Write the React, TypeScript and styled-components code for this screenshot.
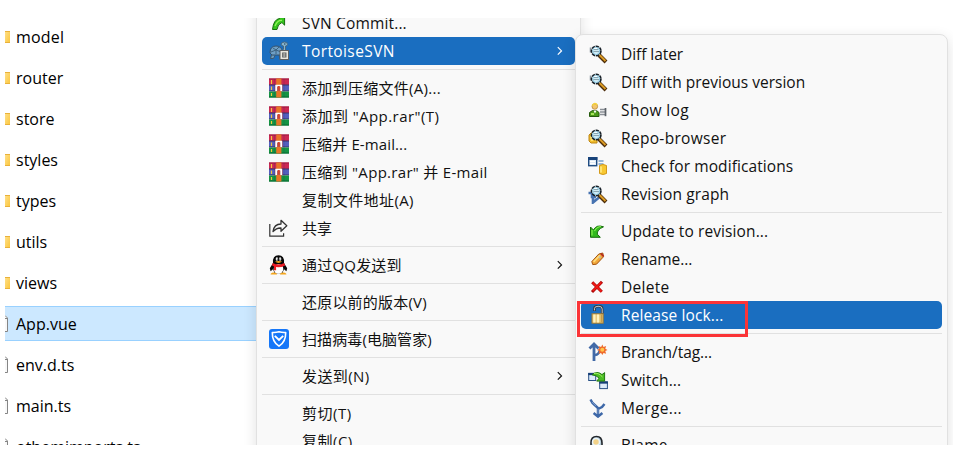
import React from "react";
import styled, { createGlobalStyle } from "styled-components";

const GlobalStyle = createGlobalStyle`
  * { box-sizing: border-box; }
  body { margin: 0; background: #fff; overflow: hidden; }
`;

const Desktop = styled.main`
  width: 953px;
  height: 449px;
  padding: 18px 0 4px 5px;
  background: #fff;
  color: #111;
  font-family: "Open Sans", "Noto Sans CJK SC", sans-serif;
`;

const Viewport = styled.div`
  position: relative;
  height: 427px;
  overflow: hidden;
`;

const FileList = styled.ul`
  list-style: none;
  margin: 0;
  padding: 1px 0 0;
  width: 252px;
  display: flex;
  flex-direction: column;
  gap: 6px;
`;

const FileRow = styled.li<{ $selected?: boolean }>`
  display: flex;
  align-items: center;
  flex: none;
  height: 35px;
  border: solid ${(p) => (p.$selected ? "#99d1ff" : "transparent")};
  border-width: 1px 0;
  background: ${(p) => (p.$selected ? "#cce8ff" : "transparent")};
`;

const FileIconSlot = styled.span`
  display: flex;
  width: 11px;
  height: 20px;
  flex: none;
`;

const FileName = styled.span<{ $track?: number }>`
  font-size: 16px;
  line-height: 22px;
  letter-spacing: ${(p) => p.$track ?? 0}px;
  white-space: nowrap;
  color: #000;
`;

const MenuPanel = styled.nav`
  position: absolute;
  display: flex;
  flex-direction: column;
  padding: 5px;
  background: #f9f9f9;
  border: 1px solid #e1e1e1;
  border-radius: 8px;
  box-shadow: 0 4px 14px rgba(0, 0, 0, 0.12);
`;

const RootMenu = styled(MenuPanel)`
  left: 251px;
  top: -69px;
  width: 325px;
  height: 560px;
  padding-top: 59px;
`;

const SubMenu = styled(MenuPanel)`
  left: 570px;
  top: 16px;
  width: 373px;
  height: 480px;
`;

const MenuItem = styled.div<{ $active?: boolean }>`
  display: flex;
  align-items: center;
  flex: none;
  height: 28px;
  padding-left: 7px;
  border-radius: 5px;
  background: ${(p) => (p.$active ? "#1a6ec0" : "transparent")};
  color: ${(p) => (p.$active ? "#fff" : "#111")};
`;

const IconSlot = styled.span`
  display: flex;
  flex: none;
  width: 20px;
  height: 20px;
  margin-right: 13px;
`;

const Label = styled.span<{ $size: number; $track?: number }>`
  flex: 1;
  font-size: ${(p) => p.$size}px;
  line-height: 22px;
  letter-spacing: ${(p) => p.$track ?? 0}px;
  white-space: nowrap;
`;

const Divider = styled.hr`
  flex: none;
  width: 100%;
  height: 1px;
  margin: 4px 0;
  border: 0;
  background: #e1e1e1;
`;

const ArrowSlot = styled.span`
  display: flex;
  margin-right: 11px;
`;

const Highlight = styled.div`
  position: absolute;
  left: 572px;
  top: 283px;
  width: 171px;
  height: 36px;
  border: 3px solid #fb3437;
`;

const Svg = ({ children }: { children: React.ReactNode }) => (
  <svg width="20" height="20" viewBox="0 0 20 20" aria-hidden="true">{children}</svg>
);

const FolderEdge = () => (
  <svg width="6" height="20" viewBox="0 0 6 20" aria-hidden="true">
    <defs>
      <linearGradient id="folder" x1="0" y1="0" x2="1" y2="1">
        <stop offset="0" stopColor="#ffe08a" />
        <stop offset="1" stopColor="#fbc63c" />
      </linearGradient>
    </defs>
    <path d="M0 4h5v12H0z" fill="url(#folder)" />
    <path d="M0 4h5v1H0zM0 15h5v1H0z" fill="#e9b13a" />
  </svg>
);

const PageEdge = () => (
  <svg width="6" height="20" viewBox="0 0 6 20" aria-hidden="true">
    <path d="M0 1l3 3v14H0z" fill="#f8f8f8" />
    <path d="M0 1.5L2.5 4v13.5H0M0 4.5h2.5" fill="none" stroke="#858585" />
  </svg>
);

const Lens = () => (
  <>
    <path d="M11 11l7 7" stroke="#4b2b0a" strokeWidth="4" />
    <path d="M11.3 10.8l6.2 6.2" stroke="#d99a24" strokeWidth="2" />
    <circle cx="8.2" cy="7" r="4.7" fill="#d9f2fb" stroke="#182028" strokeWidth="1.7" strokeDasharray="3.4 .8" />
    <circle cx="8.2" cy="7" r="3.5" fill="none" stroke="#8ccbe6" />
    <path d="M5.8 5.6h4.6M5.4 7.6h5.6" stroke="#829faa" />
    <path d="M6 4.4h3" stroke="#fff" />
  </>
);

const Diff = () => (
  <Svg><path d="M2.5 3.5v5" stroke="#8f98a2" strokeWidth="1.5" /><Lens /></Svg>
);

const Log = () => (
  <Svg>
    <path d="M1.5 16.5v-4l3-2h4l2.5 2v4z" fill="#4a9818" stroke="#25590d" />
    <path d="M3 14h3" stroke="#a5e35a" strokeWidth="2" />
    <path d="M5.5 10.5L7 13.5l1.5-3z" fill="#fff" />
    <circle cx="6.8" cy="6.5" r="2.8" fill="#f3c66d" stroke="#ad7a2b" strokeWidth=".7" />
    <path d="M4.3 5.6Q6.8 1.5 9.3 5" fill="none" stroke="#f6d43c" strokeWidth="1.5" />
    <path d="M12 9.5h5M12 12h5M12 14.5h5" stroke="#8b9097" strokeWidth="1.3" />
    <path d="M17.5 8v8.2" stroke="#5c6268" strokeWidth="1.7" />
  </Svg>
);

const Repo = () => (
  <Svg>
    <path d="M1 7l2-2h6v10H3l-2-2z" fill="#f1bd2d" stroke="#be8615" />
    <path d="M2 8h3v5H3z" fill="#ffe16c" />
    <Lens />
  </Svg>
);

const Check = () => (
  <Svg>
    <rect x=".7" y="1.7" width="8" height="8" fill="#dfeaf6" stroke="#214d82" strokeWidth="1.4" />
    <path d="M0 2.5h9.4" stroke="#18437a" strokeWidth="3" />
    <path d="M2 5.5h5M2 7.5h5" stroke="#fff" />
    <path d="M10.5 5h5M10.5 8h5" stroke="#3875b5" strokeWidth="1.2" />
    <path d="M11.5 9.5q3.5-2 7 0v8q-3.5 2-7 0z" fill="#f8c832" stroke="#d39a1a" />
    <path d="M13 10.5v6" stroke="#ffec8d" strokeWidth="1.5" />
  </Svg>
);

const Graph = () => (
  <Svg>
    <path d="M.5 9h3.5v4h4M5 6v12.5l6-5" fill="none" stroke="#4773b1" strokeWidth="2.6" />
    <Lens />
  </Svg>
);

const Update = () => (
  <Svg>
    <path d="M2.5 6v10.3h9.8l-3-3.1q-.6-4.4 6.2-7.4Q8.5 3.2 5.5 9z" fill="#31b91e" stroke="#176c0c" strokeWidth="1" />
    <path d="M4 9v5.5M6.5 10Q9 5.5 13 5.5" fill="none" stroke="#86ef4d" strokeWidth="1.2" />
  </Svg>
);

const Rename = () => (
  <Svg>
    <path d="M4.7 15.6l-.9-3L10.8 5l4-1 .7 3.8-7 7.4z" fill="#f2a73b" stroke="#a4540f" />
    <path d="M5.6 12.8l6.2-6.4" stroke="#ffdc78" strokeWidth="1.8" />
    <path d="M12.8 4.5l2.8 2.9" stroke="#b62a22" strokeWidth="1.7" />
    <circle cx="11.7" cy="8.3" r="1.1" fill="#b9bdc1" />
  </Svg>
);

const Delete = () => (
  <Svg>
    <path d="M4.2 5.2l9.6 9.6M14 4.8L4 15" stroke="#a90808" strokeWidth="3" />
    <path d="M4.6 5.6l9 9M13.4 5.4L4.8 14" stroke="#f21b17" strokeWidth="1.6" />
  </Svg>
);

const Unlock = () => (
  <Svg>
    <path d="M6.5 6V3.4Q6.5 1.2 10 1.2h1q3.2 0 3.2 2.8v5" fill="none" stroke="#333b43" strokeWidth="2.6" />
    <path d="M6.5 5.4V3.5Q6.5 1.3 10 1.3h1q3.2 0 3.2 2.8v4" fill="none" stroke="#d2d7dc" strokeWidth=".9" />
    <rect x="4" y="8.8" width="11.2" height="9.4" fill="#e7c776" stroke="#a07b35" />
    <path d="M6.4 9.5v8M10 9.5v8" stroke="#fff2bf" strokeWidth="2.2" />
    <path d="M13.5 9.5v8" stroke="#c59c4c" strokeWidth="1.5" />
  </Svg>
);

const Branch = () => (
  <Svg>
    <path d="M6 19V3M1.5 6.5L6 2l4.5 4.5" fill="none" stroke="#4169a7" strokeWidth="2.8" />
    <path d="M7 13q4-.5 4.6-4.5" fill="none" stroke="#4169a7" strokeWidth="2.4" />
    <path d="M14.3 2.5l1.2 2.4 2.6-.8-.8 2.6 2.2 1.2-2.2 1.2.8 2.6-2.6-.8-1.2 2.2-1.2-2.2-2.6.8.8-2.6L9 7.9l2.3-1.2-.8-2.6 2.6.8z" fill="#ef6b2c" />
    <circle cx="14.3" cy="7.8" r="2" fill="#ffc64b" />
  </Svg>
);

const Switch = () => (
  <Svg>
    <rect x=".7" y="3.5" width="7" height="7" fill="#dcebfa" stroke="#274f84" />
    <path d="M.2 4h7" stroke="#163f78" strokeWidth="2.3" />
    <rect x="11.7" y="12" width="7.7" height="6.6" fill="#dcebfa" stroke="#274f84" />
    <path d="M11.2 12.5h8.6" stroke="#163f78" strokeWidth="2.3" />
    <path d="M4 4.8Q9 .3 14 4.6l2.6-2v8.5H8.7l2.5-3Q8 5 4 4.8z" fill="#4bbd24" stroke="#217812" />
    <path d="M6 3.6Q10 2 14.5 7" fill="none" stroke="#a2ef63" />
  </Svg>
);

const Merge = () => (
  <Svg>
    <path d="M2.5 1.5l2 3.5L10 10v8M16.5 6L14 9l-4 2M5.6 15l4.4 3.6 4.4-3.6" fill="none" stroke="#3e68a8" strokeWidth="2.5" />
    <path d="M4 4l4 4M10 11v5" stroke="#7898c8" />
  </Svg>
);

const Blame = () => (
  <Svg>
    <path d="M3 8Q3 1.5 8.5 1.5T14 8v4H3z" fill="#b7cbd6" stroke="#22272c" strokeWidth="1.6" />
    <circle cx="8" cy="7" r="3.5" fill="#f3d289" stroke="#e9f5fb" strokeWidth="1.5" />
  </Svg>
);

const Commit = () => (
  <Svg>
    <path d="M3.5 16.5Q4.5 6.5 10.5 5.5L8.3 3.5H15.6v8.7l-2.7-2.7Q8.5 11 8 16.5z" fill="#35c51d" stroke="#176d0d" />
    <path d="M6 13q2.5-6 7-5.5" fill="none" stroke="#91f35a" strokeWidth="1.3" />
  </Svg>
);

const Tortoise = () => (
  <Svg>
    <path d="M2.5 14l-1 3.5h3l1.5-3M10 14l1 4" fill="#709dbb" stroke="#3d5971" />
    <path d="M1 12Q1 5 7 5q5 0 6.5 5l-1 4H3z" fill="#6e9fc5" stroke="#35526d" />
    <path d="M4 7l3 2 3-3M7 9v4M2 11l5-2 5 2" fill="none" stroke="#3c617f" />
    <path d="M12.5 11l2-3V5q-2.3 0-2.3-1.8Q12.5 1 15.5 1q3 0 3 2.4 0 1.6-2 1.6v4" fill="#86b5d0" stroke="#49677e" />
    <circle cx="15.8" cy="3" r=".7" fill="#26394a" />
    <rect x="11" y="9.5" width="8.5" height="9" fill="#e9e7de" stroke="#5d5f60" />
    <path d="M13.7 12h3.2v4h-3.2zM13.5 14h3.6" fill="none" stroke="#5d6061" strokeWidth="1.1" />
  </Svg>
);

const Archive = () => (
  <Svg>
    <path d="M0 .5h20V7H0z" fill="#cc2852" />
    <path d="M0 1h20" stroke="#9c1c40" />
    <path d="M0 7h20v6H0z" fill="#545fbd" />
    <path d="M0 7h20M0 13h20" stroke="#3a3569" />
    <path d="M0 13.5h20v6H0z" fill="#159443" />
    <path d="M0 19h20" stroke="#0b6b33" />
    <path d="M2.5 2v4M2.5 8.5V12M2.5 15v3" stroke="#f3c83e" strokeWidth="1.2" />
    <path d="M5.5 1v18M15 1v18" stroke="#1b2858" strokeOpacity=".18" />
    <path d="M7.2.5h5.2v19H7.2z" fill="#e87527" />
    <path d="M6 7h7.6v6H6z" fill="#b35a61" />
    <path d="M7.2 13V7.7h5V13" fill="none" stroke="#fff" strokeWidth="1.7" />
    <path d="M9.8 8v4.5" stroke="#d5432c" strokeWidth="1.8" />
  </Svg>
);

const Share = () => (
  <Svg>
    <path d="M.8 6v12.2h13.8v-3" fill="none" stroke="#333" strokeWidth="1.2" />
    <path d="M4 13.6Q5 6.1 12 6V2.3l5.8 5.5-5.8 5.4V10q-4.6-.2-8 3.6z" fill="none" stroke="#333" strokeWidth="1.3" strokeLinejoin="round" />
  </Svg>
);

const Penguin = () => (
  <Svg>
    <path d="M4 8Q3.3.5 9.5.3 15.7.5 15 8l3.2 5.3-.8 3-2.4-2-1.8 4.2H5.8L4 14.3l-2.4 2-.8-3z" fill="#080808" />
    <ellipse cx="9.5" cy="14" rx="4.8" ry="4.8" fill="#fff" />
    <ellipse cx="7.9" cy="4" rx="1.2" ry="1.8" fill="#fff" />
    <ellipse cx="11.1" cy="4" rx="1.2" ry="1.8" fill="#fff" />
    <path d="M8.3 3.5v1.3M10.8 3.5v1.3" stroke="#111" strokeWidth=".8" />
    <path d="M6 6.6Q9.5 5.2 13 6.6 9.5 9.2 6 6.6z" fill="#f4a61b" />
    <path d="M3.8 8.1q5.7 3 11.4 0l.9 2.3q-4.4 2.4-9 1.7v3.2H5v-3.8l-2.1-1.2z" fill="#ed1c24" />
    <path d="M1.5 19q2-2.2 5.6-1l1 1.4H1.8zM17.5 19q-2-2.2-5.6-1l-1 1.4h6.3z" fill="#f4a51c" />
  </Svg>
);

const Shield = () => (
  <Svg>
    <rect width="20" height="20" rx="3" fill="#1677f8" />
    <path d="M10 2.8q3.2 1 6.7.7.2 9.3-6.7 13.7Q3.1 12.8 3.3 3.5q3.5.3 6.7-.7z" fill="none" stroke="#fff" strokeWidth="1.6" strokeLinejoin="round" />
    <path d="M5.8 6.8l4.2 4.2 4.2-4.2" fill="none" stroke="#fff" strokeWidth="1.9" />
  </Svg>
);

const Arrow = () => (
  <svg width="8" height="10" viewBox="0 0 8 10" aria-hidden="true">
    <path d="M1.8 1.2l3.7 3.7-3.7 3.7" fill="none" stroke="currentColor" strokeWidth="1.2" />
  </svg>
);

type Entry =
  | "divider"
  | { text: string; icon?: React.ComponentType; track?: number; size?: number; arrow?: boolean; active?: boolean };

const rootEntries: Entry[] = [
  { text: "SVN Commit...", icon: Commit, track: 0.15 },
  { text: "TortoiseSVN", icon: Tortoise, track: 0.4, arrow: true, active: true },
  "divider",
  { text: "添加到压缩文件(A)...", icon: Archive, track: 0.3, size: 15 },
  { text: '添加到 "App.rar"(T)', icon: Archive, track: 0.44, size: 15 },
  { text: "压缩并 E-mail...", icon: Archive, track: 0.12, size: 15 },
  { text: '压缩到 "App.rar" 并 E-mail', icon: Archive, track: 0.3, size: 15 },
  { text: "复制文件地址(A)", track: 0.4, size: 15 },
  { text: "共享", icon: Share, size: 15 },
  "divider",
  { text: "通过QQ发送到", icon: Penguin, track: 0.2, size: 15, arrow: true },
  "divider",
  { text: "还原以前的版本(V)", track: 0.2, size: 15 },
  "divider",
  { text: "扫描病毒(电脑管家)", icon: Shield, track: 0.1, size: 15 },
  "divider",
  { text: "发送到(N)", track: 0.4, size: 15, arrow: true },
  "divider",
  { text: "剪切(T)", track: 0.5, size: 15 },
  { text: "复制(C)", track: 0.5, size: 15 },
];

const subEntries: Entry[] = [
  { text: "Diff later", icon: Diff, track: -0.06 },
  { text: "Diff with previous version", icon: Diff, track: 0.01 },
  { text: "Show log", icon: Log, track: 0.38 },
  { text: "Repo-browser", icon: Repo, track: 0.32 },
  { text: "Check for modifications", icon: Check, track: 0.08 },
  { text: "Revision graph", icon: Graph, track: 0.12 },
  "divider",
  { text: "Update to revision...", icon: Update, track: 0.1 },
  { text: "Rename...", icon: Rename, track: -0.05 },
  { text: "Delete", icon: Delete, track: 0.3 },
  { text: "Release lock...", icon: Unlock, track: 0.12, active: true },
  "divider",
  { text: "Branch/tag...", icon: Branch, track: -0.06 },
  { text: "Switch...", icon: Switch, track: 0.13 },
  { text: "Merge...", icon: Merge, track: 0.33 },
  "divider",
  { text: "Blame...", icon: Blame, track: 0.2 },
];

const Entries = ({ items }: { items: Entry[] }) => (
  <>
    {items.map((item, i) => {
      if (item === "divider") return <Divider key={i} />;
      const Icon = item.icon;
      return (
        <MenuItem key={i} $active={item.active}>
          <IconSlot>{Icon && <Icon />}</IconSlot>
          <Label $size={item.size ?? 15.5} $track={item.track}>{item.text}</Label>
          {item.arrow && <ArrowSlot><Arrow /></ArrowSlot>}
        </MenuItem>
      );
    })}
  </>
);

const files = [
  { name: "model", folder: true, track: 0.2 },
  { name: "router", folder: true },
  { name: "store", folder: true },
  { name: "styles", folder: true },
  { name: "types", folder: true },
  { name: "utils", folder: true },
  { name: "views", folder: true },
  { name: "App.vue", selected: true },
  { name: "env.d.ts" },
  { name: "main.ts" },
  { name: "othemimports.ts" },
];

export default function App() {
  return (
    <Desktop>
      <GlobalStyle />
      <Viewport>
        <FileList>
          {files.map((f) => (
            <FileRow key={f.name} $selected={f.selected}>
              <FileIconSlot>{f.folder ? <FolderEdge /> : <PageEdge />}</FileIconSlot>
              <FileName $track={f.track}>{f.name}</FileName>
            </FileRow>
          ))}
        </FileList>
        <RootMenu><Entries items={rootEntries} /></RootMenu>
        <SubMenu><Entries items={subEntries} /></SubMenu>
        <Highlight />
      </Viewport>
    </Desktop>
  );
}
